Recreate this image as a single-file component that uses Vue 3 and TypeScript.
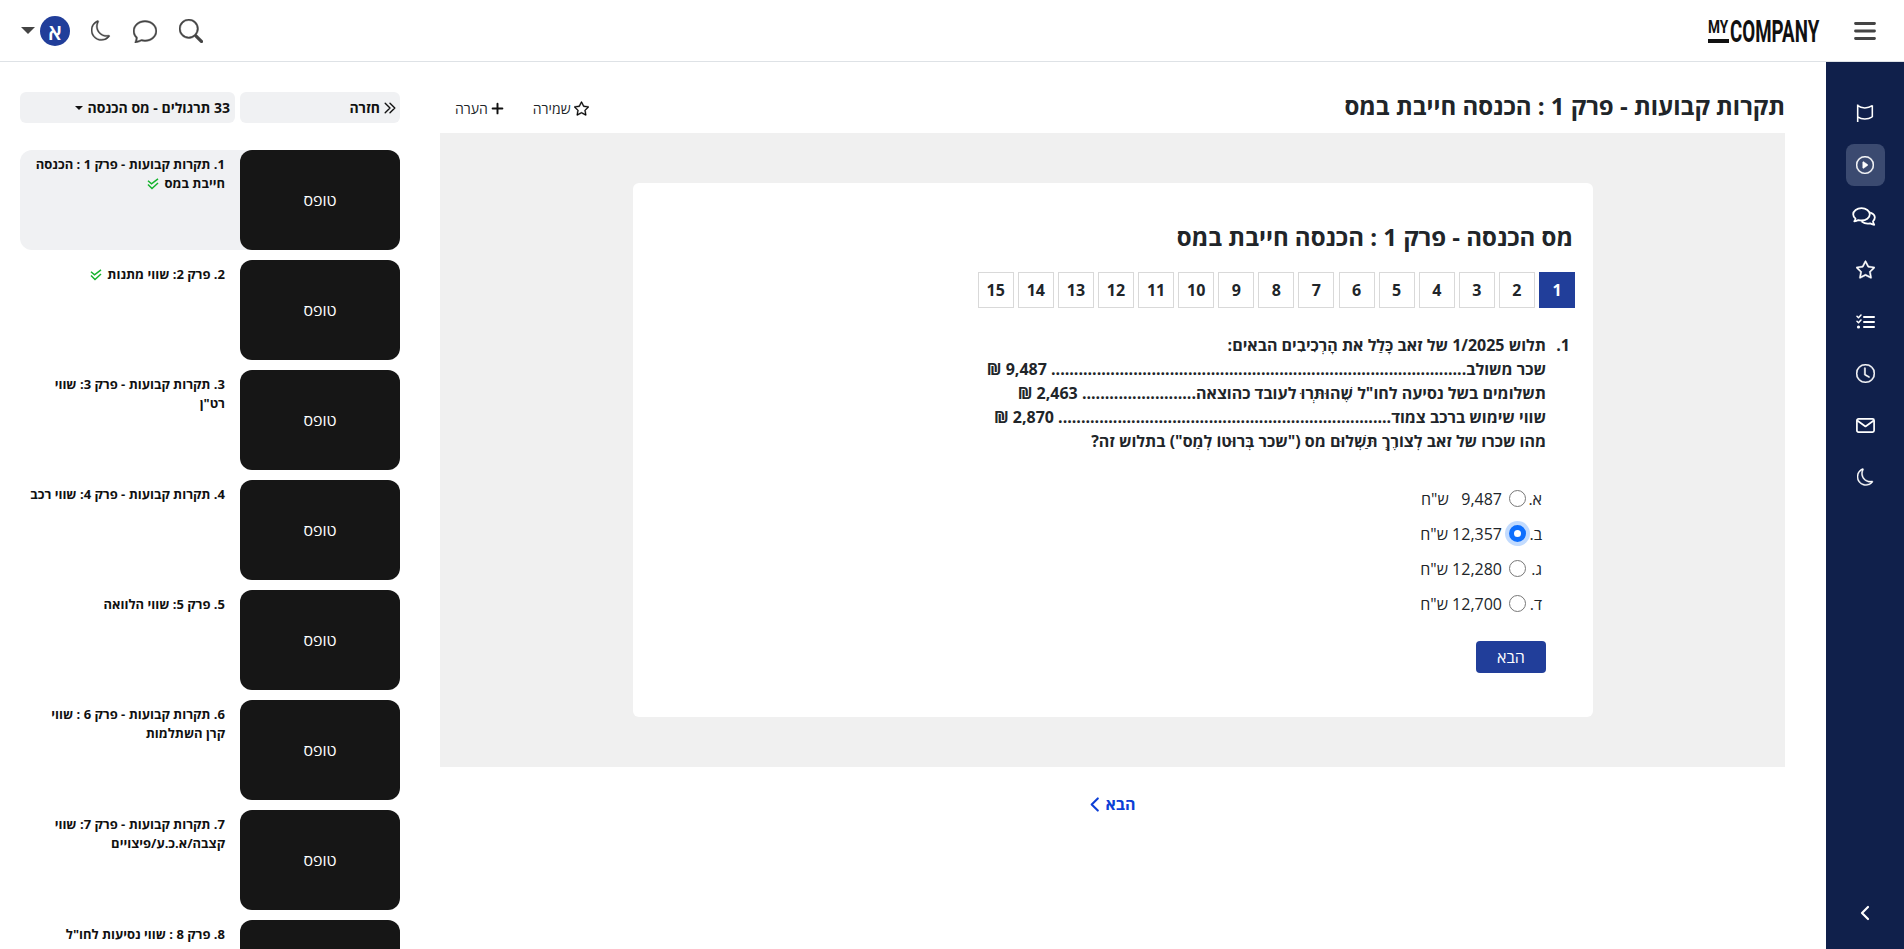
<script setup lang="ts">
const lessons = [
  { title: '1. תקרות קבועות - פרק 1 : הכנסה חייבת במס', done: true, active: true },
  { title: '2. פרק 2: שווי מתנות', done: true, active: false },
  { title: '3. תקרות קבועות - פרק 3: שווי רט"ן', done: false, active: false },
  { title: '4. תקרות קבועות - פרק 4: שווי רכב', done: false, active: false },
  { title: '5. פרק 5: שווי הלוואה', done: false, active: false },
  { title: '6. תקרות קבועות - פרק 6 : שווי קרן השתלמות', done: false, active: false },
  { title: '7. תקרות קבועות - פרק 7: שווי קצבה/א.כ.ע/פיצויים', done: false, active: false },
  { title: '8. פרק 8 : שווי נסיעות לחו"ל', done: false, active: false },
]
const pages = Array.from({ length: 15 }, (_, i) => i + 1)
const dots = (n: number) => '.'.repeat(n)
const options = [
  { letter: 'א.', text: '9,487 \u00a0\u00a0ש"ח', checked: false },
  { letter: 'ב.', text: '12,357 ש"ח', checked: true },
  { letter: 'ג.', text: '12,280 ש"ח', checked: false },
  { letter: 'ד.', text: '12,700 ש"ח', checked: false },
]
</script>

<template>
  <div class="app" dir="rtl">
    <header class="topbar">
      <div class="top-right">
        <svg class="burger" viewBox="0 0 22 18" width="22" height="18"><path d="M1.500 1.500h19M1.500 9h19M1.500 16.500h19" stroke="#444" stroke-width="2.800" fill="none" stroke-linecap="round" /></svg>
        <div class="logo" dir="ltr"><span class="logo-my"><span class="logo-my-t">MY</span></span><span class="logo-co">COMPANY</span></div>
      </div>
      <div class="top-left">
        <svg class="ti" viewBox="0 0 16 16" width="24" height="24"><path d="M11.742 10.344a6.500 6.500 0 1 0-1.397 1.398h-.001c.03.04.062.078.098.115l3.850 3.850a1 1 0 0 0 1.415-1.414l-3.850-3.850a1.007 1.007 0 0 0-.115-.1zM12 6.500a5.500 5.500 0 1 1-11 0 5.500 5.500 0 0 1 11 0z" /></svg>
        <svg class="ti" viewBox="0 0 16 16" width="24" height="24"><path d="M2.678 11.894a1 1 0 0 1 .287.801 10.970 10.970 0 0 1-.398 2c1.395-.323 2.247-.697 2.634-.893a1 1 0 0 1 .71-.074A8.060 8.060 0 0 0 8 14c3.996 0 7-2.807 7-6 0-3.192-3.004-6-7-6S1 4.808 1 8c0 1.468.617 2.830 1.678 3.894zm-.493 3.905a21.682 21.682 0 0 1-.713.129c-.2.032-.352-.176-.273-.362a9.680 9.680 0 0 0 .244-.637l.003-.01c.248-.72.45-1.548.524-2.319C.743 11.370 0 9.760 0 8c0-3.866 3.582-7 8-7s8 3.134 8 7-3.582 7-8 7a9.060 9.060 0 0 1-2.347-.306c-.52.263-1.639.742-3.468 1.105z" /></svg>
        <svg class="ti moon" viewBox="0 0 16 16" width="20" height="21"><path d="M6 .278a.768.768 0 0 1 .08.858 7.208 7.208 0 0 0-.878 3.460c0 4.021 3.278 7.277 7.318 7.277.527 0 1.040-.055 1.533-.16a.787.787 0 0 1 .81.316.733.733 0 0 1-.031.893A8.349 8.349 0 0 1 8.344 16C3.734 16 0 12.286 0 7.710 0 4.266 2.114 1.312 5.124.060A.752.752 0 0 1 6 .278zM4.858 1.311A7.269 7.269 0 0 0 1.025 7.710c0 4.020 3.279 7.276 7.319 7.276a7.316 7.316 0 0 0 5.205-2.162c-.337.042-.68.063-1.029.063-4.610 0-8.343-3.714-8.343-8.290 0-1.167.242-2.278.681-3.286z" /></svg>
        <div class="user">
          <span class="avatar">א</span>
          <span class="caret-lg"></span>
        </div>
      </div>
    </header>

    <div class="body">
      <nav class="side">
        <div class="nav-items">
          <div class="nav-item"><svg viewBox="0 0 16 16" width="18" height="18" fill="none" stroke="#fff" stroke-width="1.400"><path d="M1.500 .5v15.500M14.500 1v10.500M1.500 1.500C5 4.200 10.500 4.200 14.500 1.500M1.500 11.500C5 14 10.500 14 14.500 11.500" /></svg></div>
          <div class="nav-item active"><svg class="fb" viewBox="0 0 16 16" width="18" height="18"><path d="M8 15A7 7 0 1 1 8 1a7 7 0 0 1 0 14zm0 1A8 8 0 1 0 8 0a8 8 0 0 0 0 16z" /><path d="M6.271 5.055a.5.500 0 0 1 .52.038l3.500 2.500a.5.500 0 0 1 0 .814l-3.500 2.500A.5.500 0 0 1 6 10.500v-5a.5.500 0 0 1 .271-.445z" /></svg></div>
          <div class="nav-item"><svg class="chats" viewBox="0 0 24 20" width="24" height="20" fill="none" stroke="#fff" stroke-width="1.800" stroke-linejoin="round" stroke-linecap="round"><path d="M9.500 1.200c-4.600 0-8.300 2.700-8.300 6.100 0 1.700.9 3.200 2.300 4.300-.1 1-.6 2-1.200 2.800 1.600-.1 3-.6 4.100-1.300 1 .3 2 .4 3.100.4 4.600 0 8.300-2.800 8.300-6.200S14.100 1.200 9.500 1.200z" /><path d="M18.900 5.800c2.400.9 3.900 2.700 3.900 4.800 0 1.400-.7 2.700-1.800 3.700.1 1.300.5 2.400 1.200 3.500-1.700-.2-3.100-.7-4.200-1.500-.8.2-1.600.3-2.400.3-2.200 0-4.100-.7-5.500-1.800" /></svg></div>
          <div class="nav-item"><svg class="fb" viewBox="0 0 16 16" width="19" height="19"><path d="M2.866 14.850c-.078.444.36.791.746.593l4.390-2.256 4.389 2.256c.386.198.824-.149.746-.592l-.83-4.730 3.522-3.356c.33-.314.16-.888-.282-.950l-4.898-.696L8.465.792a.513.513 0 0 0-.927 0L5.354 5.120l-4.898.696c-.441.062-.612.636-.283.950l3.523 3.356-.83 4.730zm4.905-2.767-3.686 1.894.694-3.957a.565.565 0 0 0-.163-.505L1.710 6.745l4.052-.576a.525.525 0 0 0 .393-.288L8 2.223l1.847 3.658a.525.525 0 0 0 .393.288l4.052.575-2.906 2.770a.565.565 0 0 0-.163.506l.694 3.957-3.686-1.894a.503.503 0 0 0-.461 0z" /></svg></div>
          <div class="nav-item"><svg viewBox="0 0 19 15" width="19" height="15" fill="none" stroke="#fff" stroke-width="2" stroke-linecap="round" stroke-linejoin="round"><path d="M8 3h10M8 8h10M8 13h10" /><path d="M1 2.200l1.500 1.500L5 1M1 7.200l1.500 1.500L5 6" stroke-width="1.500" /><circle cx="2.500" cy="13" r="1.600" fill="#fff" stroke="none" /></svg></div>
          <div class="nav-item"><svg class="fb" viewBox="0 0 16 16" width="19" height="19"><path d="M8 3.500a.5.500 0 0 0-1 0V9a.5.500 0 0 0 .252.434l3.500 2a.5.500 0 0 0 .496-.868L8 8.710V3.500z" /><path d="M8 16A8 8 0 1 0 8 0a8 8 0 0 0 0 16zm7-8A7 7 0 1 1 1 8a7 7 0 0 1 14 0z" /></svg></div>
          <div class="nav-item"><svg viewBox="0 0 19 15" width="19" height="15" fill="none" stroke="#fff" stroke-width="1.700" stroke-linejoin="round"><rect x=".9" y=".9" width="17.200" height="13.200" rx="1.600" /><path d="M1.200 2.500 9.500 8.500 17.800 2.500" /></svg></div>
          <div class="nav-item"><svg class="fb" viewBox="0 0 16 16" width="17" height="18"><path d="M6 .278a.768.768 0 0 1 .08.858 7.208 7.208 0 0 0-.878 3.460c0 4.021 3.278 7.277 7.318 7.277.527 0 1.040-.055 1.533-.16a.787.787 0 0 1 .81.316.733.733 0 0 1-.031.893A8.349 8.349 0 0 1 8.344 16C3.734 16 0 12.286 0 7.710 0 4.266 2.114 1.312 5.124.060A.752.752 0 0 1 6 .278zM4.858 1.311A7.269 7.269 0 0 0 1.025 7.710c0 4.020 3.279 7.276 7.319 7.276a7.316 7.316 0 0 0 5.205-2.162c-.337.042-.68.063-1.029.063-4.610 0-8.343-3.714-8.343-8.290 0-1.167.242-2.278.681-3.286z" /></svg></div>
        </div>
        <div class="nav-item collapse"><svg viewBox="0 0 16 16" width="16" height="16"><path d="M11 2 5 8l6 6" stroke="#fff" stroke-width="2.200" fill="none" stroke-linecap="round" stroke-linejoin="round" /></svg></div>
      </nav>

      <main class="main">
        <div class="title-row">
          <h1 class="page-title">תקרות קבועות - פרק 1 : הכנסה חייבת במס</h1>
          <div class="title-actions">
            <span class="act"><svg viewBox="0 0 16 16" width="15" height="15"><path stroke="#111" stroke-width=".4" d="M2.866 14.850c-.078.444.36.791.746.593l4.390-2.256 4.389 2.256c.386.198.824-.149.746-.592l-.83-4.730 3.522-3.356c.33-.314.16-.888-.282-.950l-4.898-.696L8.465.792a.513.513 0 0 0-.927 0L5.354 5.120l-4.898.696c-.441.062-.612.636-.283.950l3.523 3.356-.83 4.730zm4.905-2.767-3.686 1.894.694-3.957a.565.565 0 0 0-.163-.505L1.710 6.745l4.052-.576a.525.525 0 0 0 .393-.288L8 2.223l1.847 3.658a.525.525 0 0 0 .393.288l4.052.575-2.906 2.770a.565.565 0 0 0-.163.506l.694 3.957-3.686-1.894a.503.503 0 0 0-.461 0z" /></svg>שמירה</span>
            <span class="act"><svg viewBox="0 0 16 16" width="13" height="13"><path d="M8 2v12M2 8h12" stroke="#111" stroke-width="2.400" fill="none" stroke-linecap="round" /></svg>הערה</span>
          </div>
        </div>
        <section class="panel">
          <div class="card">
            <h2 class="card-title">מס הכנסה - פרק 1 : הכנסה חייבת במס</h2>
            <div class="pages">
              <span v-for="p in pages" :key="p" class="pg" :class="{ on: p === 1 }">{{ p }}</span>
            </div>
            <div class="question">
              <span class="q-num">1.</span>
              <div class="q-text">
                <div>תלוש 1/2025 של זאב כָּלַל את הָרְכִיבִים הבאים:</div>
                <div>שכר משולב{{ dots(91) }} 9,487 ₪</div>
                <div>תשלומים בשל נסיעה לחו"ל שֶׁהוּתְּרוּ לעובד כהוצאה{{ dots(25) }} 2,463 ₪</div>
                <div>שווי שימוש ברכב צמוד{{ dots(73) }} 2,870 ₪</div>
                <div>מהו שכרו של זאב לְצוֹרֶךְ תַּשְׁלוּם מס ("שכר בְּרוּטוֹ לְמַס") בתלוש זה?</div>
              </div>
            </div>
            <div class="options">
              <label v-for="o in options" :key="o.letter" class="opt">
                <span class="letter">{{ o.letter }}</span>
                <span class="radio" :class="{ checked: o.checked }"></span>
                <span>{{ o.text }}</span>
              </label>
            </div>
            <div class="btn-row"><button class="next-btn" type="button">הבא</button></div>
          </div>
        </section>
        <div class="next-link">
          <span>הבא</span>
          <svg viewBox="0 0 16 16" width="15" height="15"><path d="M11.500 1.500 5 8l6.500 6.500" stroke="#0d3fd6" stroke-width="2.200" fill="none" stroke-linecap="round" stroke-linejoin="round" /></svg>
        </div>
      </main>

      <aside class="list">
        <div class="list-head">
          <div class="head-btn back">
            <svg viewBox="0 0 16 16" width="14" height="14"><path d="M8 2.500 13.500 8 8 13.500M2.500 2.500 8 8l-5.500 5.500" stroke="#111" stroke-width="1.600" fill="none" stroke-linecap="round" stroke-linejoin="round" /></svg>
            <span>חזרה</span>
          </div>
          <div class="head-btn sel">
            <span>33 תרגולים - מס הכנסה</span>
            <span class="caret-sm"></span>
          </div>
        </div>
        <div class="items">
          <div v-for="l in lessons" :key="l.title" class="item" :class="{ active: l.active }">
            <div class="thumb">טופס</div>
            <div class="item-title">
              {{ l.title }}
              <svg v-if="l.done" class="chk" viewBox="0 0 12 12" width="12" height="12" fill="none" stroke="#14b32c" stroke-width="1.500"><path d="M1 2.800 4.500 5.800 11 .8" /><path d="M1 6.500l4 4 6-5.500" /></svg>
            </div>
          </div>
        </div>
      </aside>
    </div>
  </div>
</template>

<style>
html, body { margin: 0; overflow: hidden; background: #fff; }
</style>

<style scoped>
.app { width: 1904px; height: 949px; overflow: hidden; font-family: "Open Sans", "Noto Sans", sans-serif; color: #212529; background: #fff; }
.topbar { height: 61px; border-bottom: 1px solid #dee2e6; display: flex; justify-content: space-between; align-items: center; padding: 0 28px 0 21px; }
.top-right { display: flex; align-items: center; gap: 36px; }
.top-left { display: flex; align-items: center; gap: 22px; }
.ti { fill: #444; stroke: #444; stroke-width: .3; display: block; }
.moon { margin-left: -1px; }
.burger { display: block; }
.logo { display: flex; align-items: flex-end; height: 24px; width: 110px; color: #111; font-family: "Roboto", sans-serif; }
.logo-my { display: block; flex: none; box-sizing: border-box; width: 21px; height: 24px; border-bottom: 4px solid #111; margin-right: 1px; }
.logo-my-t { display: block; font-size: 19px; font-weight: 700; line-height: 15px; white-space: nowrap; transform: scaleX(.72); transform-origin: left top; }
.logo-co { display: block; flex: none; width: 88px; font-size: 32px; font-weight: 700; line-height: 24px; height: 24px; transform: scaleX(.585); transform-origin: left bottom; white-space: nowrap; }
.user { display: flex; align-items: center; gap: 5px; }
.avatar { width: 30px; height: 30px; border-radius: 50%; background: #213e9a; color: #fff; display: flex; align-items: center; justify-content: center; font-size: 22px; font-weight: 600; }
.caret-lg { border: 7px solid transparent; border-top-color: #444; border-bottom: 0; }
.body { display: flex; height: 887px; }
.side { width: 78px; flex: none; background: #10204b; box-sizing: border-box; padding: 30px 0 15px; display: flex; flex-direction: column; align-items: center; justify-content: space-between; }
.nav-items { display: flex; flex-direction: column; gap: 10px; }
.nav-item { width: 39px; height: 42px; border-radius: 8px; display: flex; align-items: center; justify-content: center; fill: #fff; }
.nav-item.active { background: #3b4a70; }
.fb { stroke: #fff; stroke-width: .4; }
.chats { margin-right: 3px; }
.main { width: 1386px; flex: none; box-sizing: border-box; padding: 0 41px 0 0; }
.title-row { height: 71px; display: flex; justify-content: space-between; align-items: center; padding-top: 17px; box-sizing: border-box; }
.page-title { margin: 0; font-size: 24px; font-weight: 700; line-height: 36px; color: #212529; }
.title-actions { display: flex; gap: 29px; font-size: 14px; padding: 4px 0 0 15px; }
.act { display: flex; align-items: center; gap: 3px; }
.panel { height: 634px; background: #f0f0f0; padding: 50px 192px 50px 193px; box-sizing: border-box; }
.card { height: 534px; background: #fff; border-radius: 6px; box-sizing: border-box; padding: 36px 18px 0; }
.card-title { margin: 0 2px 0 0; font-size: 24px; font-weight: 700; line-height: 36px; }
.pages { display: flex; gap: 4.100px; margin-top: 17px; }
.pg { width: 36px; height: 36px; box-sizing: border-box; border: 1px solid #d9d9d9; display: flex; align-items: center; justify-content: center; font-size: 16px; font-weight: 700; }
.pg.on { background: #213e9a; border-color: #213e9a; color: #fff; }
.question { display: flex; margin-top: 25px; padding-right: 5px; font-size: 16px; font-weight: 700; line-height: 24px; }
.q-num { width: 24px; flex: none; }
.options { margin-top: 28px; padding-right: 33px; font-size: 16px; }
.opt { display: flex; align-items: center; height: 35px; }
.radio { width: 17px; height: 17px; box-sizing: border-box; border: 1px solid #777; border-radius: 50%; background: #fff; margin-left: 7px; }
.radio.checked { border: 5px solid #0d6efd; box-shadow: 0 0 0 4px rgba(13, 110, 253, .25); }
.letter { width: 12px; margin-left: 4px; white-space: nowrap; }
.btn-row { margin-top: 20px; padding-right: 29px; }
.next-btn { width: 70px; height: 32px; background: #213e9a; color: #fff; border: 0; border-radius: 4px; font: 400 16px "Open Sans", sans-serif; }
.next-link { display: flex; justify-content: center; align-items: center; gap: 3px; margin-top: 26px; padding-right: 2px; color: #0d3fd6; font-weight: 700; font-size: 16px; }
.list { width: 380px; flex: none; margin-right: 40px; padding-top: 30px; }
.list-head { display: flex; gap: 5px; height: 31px; }
.head-btn { display: flex; align-items: center; height: 31px; background: #f0f1f3; border-radius: 6px; padding: 0 3px 0 5px; box-sizing: border-box; font-size: 14px; font-weight: 700; color: #111; gap: 3px; }
.sel { padding-right: 5px; width: 215px; }
.back { width: 160px; }
.caret-sm { border: 4px solid transparent; border-top-color: #111; border-bottom: 0; margin-right: 1px; }
.items { margin-top: 27px; display: flex; flex-direction: column; gap: 10px; }
.item { display: flex; height: 100px; border-radius: 12px; flex: none; }
.item.active { background: #f0f1f3; }
.thumb { width: 160px; height: 100px; flex: none; background: #161616; color: #fff; border-radius: 12px; display: flex; align-items: center; justify-content: center; font-size: 16px; }
.item-title { padding: 5px 15px 0 10px; font-size: 13px; font-weight: 700; line-height: 19px; color: #111; }
.chk { vertical-align: -2px; margin-right: 2px; }
</style>
